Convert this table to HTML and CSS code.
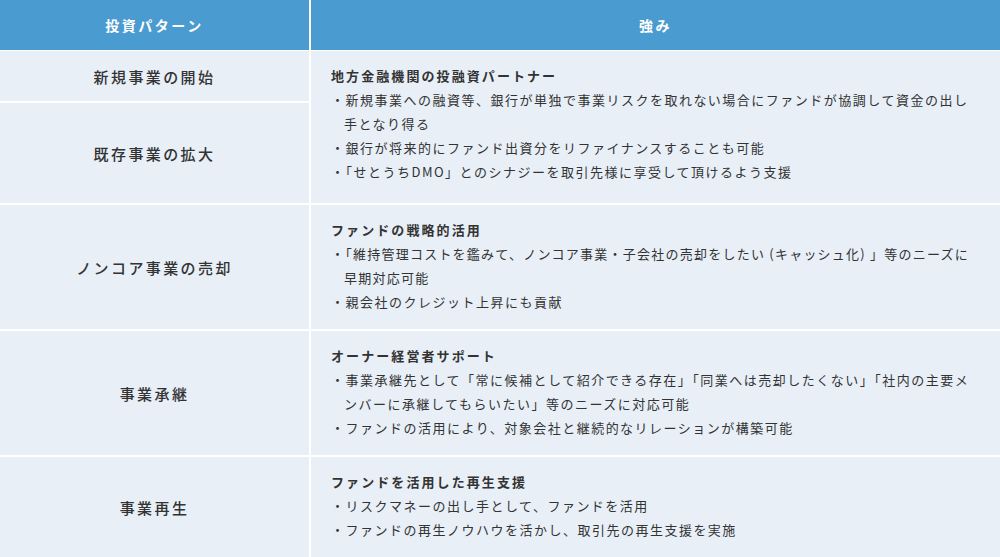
FILE: index.html
```html
<!DOCTYPE html>
<html lang="ja">
<head>
<meta charset="utf-8">
<link rel="stylesheet" href="styles.css">
</head>
<body>
<div class="table">
  <div class="head">
    <div class="th">投資パターン</div>
    <div class="th">強み</div>
  </div>
  <div class="grid">
    <div class="left-stack">
      <div class="label short">新規事業の開始</div>
      <div class="label tall">既存事業の拡大</div>
    </div>
    <div class="cell">
      <p class="title">地方金融機関の投融資パートナー</p>
      <ul>
        <li>・新規事業への融資等、銀行が単独で事業リスクを取れない場合にファンドが協調して資金の出し手となり得る</li>
        <li>・銀行が将来的にファンド出資分をリファイナンスすることも可能</li>
        <li>・「せとうちDMO」とのシナジーを取引先様に享受して頂けるよう支援</li>
      </ul>
    </div>

    <div class="label">ノンコア事業の売却</div>
    <div class="cell">
      <p class="title">ファンドの戦略的活用</p>
      <ul>
        <li class="tight">・「維持管理コストを鑑みて、ノンコア事業・子会社の売却をしたい (キャッシュ化) 」等のニーズに早期対応可能</li>
        <li>・親会社のクレジット上昇にも貢献</li>
      </ul>
    </div>

    <div class="label">事業承継</div>
    <div class="cell">
      <p class="title">オーナー経営者サポート</p>
      <ul>
        <li>・事業承継先として「常に候補として紹介できる存在」「同業へは売却したくない」「社内の主要メンバーに承継してもらいたい」等のニーズに対応可能</li>
        <li>・ファンドの活用により、対象会社と継続的なリレーションが構築可能</li>
      </ul>
    </div>

    <div class="label">事業再生</div>
    <div class="cell">
      <p class="title">ファンドを活用した再生支援</p>
      <ul>
        <li>・リスクマネーの出し手として、ファンドを活用</li>
        <li>・ファンドの再生ノウハウを活かし、取引先の再生支援を実施</li>
      </ul>
    </div>
  </div>
</div>
</body>
</html>
```

FILE: styles.css
```css
* { box-sizing: border-box; }
html, body {
  margin: 0;
  padding: 0;
  background: #ffffff;
}
body {
  font-family: "Noto Sans CJK JP", "Noto Sans", sans-serif;
  color: #333333;
}
.table {
  width: 1000px;
}
.head {
  display: grid;
  grid-template-columns: 309px 1fr;
  column-gap: 2px;
  margin-bottom: 1px;
}
.th {
  height: 50px;
  background: #4a9bcf;
  color: #ffffff;
  font-size: 14px;
  font-weight: 700;
  letter-spacing: 0.18em;
  display: flex;
  align-items: center;
  justify-content: center;
}
.grid {
  display: grid;
  grid-template-columns: 309px 1fr;
  gap: 2px;
}
.left-stack {
  display: flex;
  flex-direction: column;
  gap: 2px;
}
.label {
  background: #e8eff7;
  display: flex;
  align-items: center;
  justify-content: center;
  font-size: 15px;
  font-weight: 500;
  letter-spacing: 0.16em;
  color: #333333;
}
.label.short { height: 50px; }
.label.tall { flex: 1; min-height: 100px; }
.cell {
  background: #e8eff7;
  padding: 13px 24px 15px 20px;
}
.title {
  margin: 0;
  font-size: 13px;
  font-weight: 700;
  line-height: 24px;
  letter-spacing: 0.16em;
}
ul {
  list-style: none;
  margin: 0;
  padding: 0;
}
li {
  font-size: 13px;
  line-height: 24px;
  letter-spacing: 0.115em;
  padding-left: 1em;
  text-indent: -1em;
}
li.tight {
  letter-spacing: 0.095em;
}
```
